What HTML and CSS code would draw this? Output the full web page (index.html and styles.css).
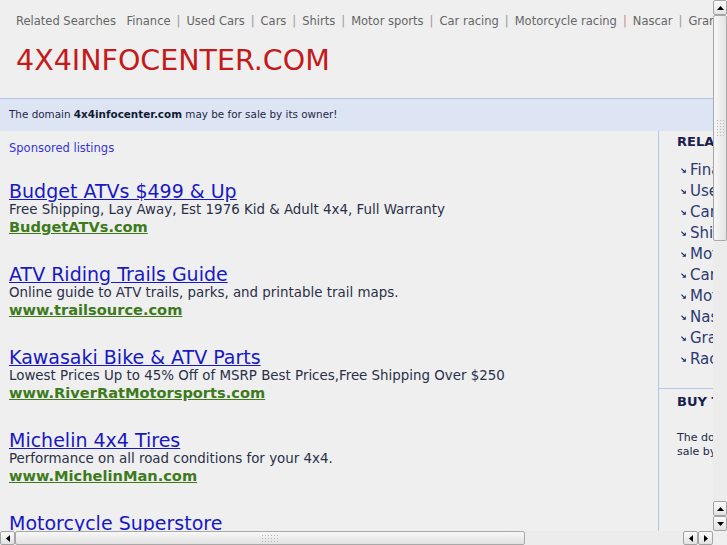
FILE: index.html
```html
<!DOCTYPE html>
<html>
<head>
<meta charset="utf-8">
<link rel="stylesheet" href="styles.css">
</head>
<body>
<div class="window">
  <div class="page">
    <div class="topbar">
      <span class="rs-label">Related Searches</span>
      <a>Finance</a><span class="sep">|</span><a>Used Cars</a><span class="sep">|</span><a>Cars</a><span class="sep">|</span><a>Shirts</a><span class="sep">|</span><a>Motor sports</a><span class="sep">|</span><a>Car racing</a><span class="sep">|</span><a>Motorcycle racing</a><span class="sep red">|</span><a>Nascar</a><span class="sep">|</span><a>Gran</a>
    </div>
    <div class="brand">4X4INFOCENTER.COM</div>
    <div class="domainbar">The domain <b>4x4infocenter.com</b> may be for sale by its owner!</div>
    <div class="content">
      <div class="main">
        <div class="sponsored">Sponsored listings</div>
        <div class="ad">
          <a class="ad-title">Budget ATVs $499 &amp; Up</a>
          <div class="ad-desc">Free Shipping, Lay Away, Est 1976 Kid &amp; Adult 4x4, Full Warranty</div>
          <a class="ad-url">BudgetATVs.com</a>
        </div>
        <div class="ad">
          <a class="ad-title">ATV Riding Trails Guide</a>
          <div class="ad-desc">Online guide to ATV trails, parks, and printable trail maps.</div>
          <a class="ad-url">www.trailsource.com</a>
        </div>
        <div class="ad">
          <a class="ad-title">Kawasaki Bike &amp; ATV Parts</a>
          <div class="ad-desc">Lowest Prices Up to 45% Off of MSRP Best Prices,Free Shipping Over $250</div>
          <a class="ad-url">www.RiverRatMotorsports.com</a>
        </div>
        <div class="ad">
          <a class="ad-title">Michelin 4x4 Tires</a>
          <div class="ad-desc">Performance on all road conditions for your 4x4.</div>
          <a class="ad-url">www.MichelinMan.com</a>
        </div>
        <div class="ad">
          <a class="ad-title">Motorcycle Superstore</a>
        </div>
      </div>
      <div class="side">
        <div class="side-box">
          <div class="side-head">RELA</div>
          <ul class="side-list">
            <li><svg class="arr" viewBox="0 0 5 5" width="5" height="5"><path d="M0.4 0.6 L2.8 3" stroke="#1c2a66" stroke-width="1.1" fill="none"/><path d="M4.8 1.2 L4.8 4.8 L1.2 4.8 Z" fill="#1c2a66"/></svg>Fina</li>
            <li><svg class="arr" viewBox="0 0 5 5" width="5" height="5"><path d="M0.4 0.6 L2.8 3" stroke="#1c2a66" stroke-width="1.1" fill="none"/><path d="M4.8 1.2 L4.8 4.8 L1.2 4.8 Z" fill="#1c2a66"/></svg>Use</li>
            <li><svg class="arr" viewBox="0 0 5 5" width="5" height="5"><path d="M0.4 0.6 L2.8 3" stroke="#1c2a66" stroke-width="1.1" fill="none"/><path d="M4.8 1.2 L4.8 4.8 L1.2 4.8 Z" fill="#1c2a66"/></svg>Car</li>
            <li><svg class="arr" viewBox="0 0 5 5" width="5" height="5"><path d="M0.4 0.6 L2.8 3" stroke="#1c2a66" stroke-width="1.1" fill="none"/><path d="M4.8 1.2 L4.8 4.8 L1.2 4.8 Z" fill="#1c2a66"/></svg>Shi</li>
            <li><svg class="arr" viewBox="0 0 5 5" width="5" height="5"><path d="M0.4 0.6 L2.8 3" stroke="#1c2a66" stroke-width="1.1" fill="none"/><path d="M4.8 1.2 L4.8 4.8 L1.2 4.8 Z" fill="#1c2a66"/></svg>Mot</li>
            <li><svg class="arr" viewBox="0 0 5 5" width="5" height="5"><path d="M0.4 0.6 L2.8 3" stroke="#1c2a66" stroke-width="1.1" fill="none"/><path d="M4.8 1.2 L4.8 4.8 L1.2 4.8 Z" fill="#1c2a66"/></svg>Car</li>
            <li><svg class="arr" viewBox="0 0 5 5" width="5" height="5"><path d="M0.4 0.6 L2.8 3" stroke="#1c2a66" stroke-width="1.1" fill="none"/><path d="M4.8 1.2 L4.8 4.8 L1.2 4.8 Z" fill="#1c2a66"/></svg>Mot</li>
            <li><svg class="arr" viewBox="0 0 5 5" width="5" height="5"><path d="M0.4 0.6 L2.8 3" stroke="#1c2a66" stroke-width="1.1" fill="none"/><path d="M4.8 1.2 L4.8 4.8 L1.2 4.8 Z" fill="#1c2a66"/></svg>Nas</li>
            <li><svg class="arr" viewBox="0 0 5 5" width="5" height="5"><path d="M0.4 0.6 L2.8 3" stroke="#1c2a66" stroke-width="1.1" fill="none"/><path d="M4.8 1.2 L4.8 4.8 L1.2 4.8 Z" fill="#1c2a66"/></svg>Gra</li>
            <li><svg class="arr" viewBox="0 0 5 5" width="5" height="5"><path d="M0.4 0.6 L2.8 3" stroke="#1c2a66" stroke-width="1.1" fill="none"/><path d="M4.8 1.2 L4.8 4.8 L1.2 4.8 Z" fill="#1c2a66"/></svg>Rac</li>
          </ul>
        </div>
        <div class="side-box buy">
          <div class="side-head">BUY T</div>
          <p class="side-text">The do<br>sale by</p>
        </div>
      </div>
    </div>
  </div>
  <div class="vscroll">
    <div class="sbtn"><svg viewBox="0 0 7 4" width="7" height="4"><path d="M0 4 L3.5 0 L7 4 Z" fill="#000"/></svg></div>
    <div class="thumb vthumb"><span class="grip vgrip"></span></div>
    <div class="track"></div>
    <div class="sbtn"><svg viewBox="0 0 7 4" width="7" height="4"><path d="M0 4 L3.5 0 L7 4 Z" fill="#000"/></svg></div>
    <div class="sbtn"><svg viewBox="0 0 7 4" width="7" height="4"><path d="M0 0 L7 0 L3.5 4 Z" fill="#000"/></svg></div>
  </div>
  <div class="hscroll">
    <div class="sbtn"><svg viewBox="0 0 4 7" width="4" height="7"><path d="M4 0 L4 7 L0 3.5 Z" fill="#000"/></svg></div>
    <div class="thumb hthumb"><span class="grip hgrip"></span></div>
    <div class="track"></div>
    <div class="sbtn"><svg viewBox="0 0 4 7" width="4" height="7"><path d="M4 0 L4 7 L0 3.5 Z" fill="#000"/></svg></div>
    <div class="sbtn"><svg viewBox="0 0 4 7" width="4" height="7"><path d="M0 0 L4 3.5 L0 7 Z" fill="#000"/></svg></div>
  </div>
  <div class="corner"></div>
</div>
</body>
</html>
```
FILE: styles.css
```css
html, body {
  margin: 0;
  padding: 0;
  overflow: hidden;
  background: #efefef;
}
body {
  font-family: "DejaVu Sans", Verdana, sans-serif;
}
.window {
  display: grid;
  grid-template-columns: 713px 14px;
  grid-template-rows: 531px 14px;
  width: 727px;
  height: 545px;
}
.page {
  overflow: hidden;
  background: #efefef;
}
.topbar {
  height: 43px;
  line-height: 43px;
  padding-left: 16px;
  font-size: 11.5px;
  color: #666;
  white-space: nowrap;
}
.rs-label { margin-right: 7px; }
.topbar a { color: #666; }
.sep { margin: 0 6px; color: #9a9a9a; }
.sep.red { color: #c88; }
.brand {
  height: 55px;
  line-height: 36px;
  padding-left: 16px;
  font-size: 28.5px;
  color: #c41a1a;
  white-space: nowrap;
}
.domainbar {
  border-top: 1px solid #b3c6e6;
  background: #dde5f4;
  height: 30px;
  line-height: 30px;
  padding: 0 0 2px 9px;
  font-size: 10.4px;
  color: #1d2748;
  white-space: nowrap;
}
.domainbar b { color: #111a33; }
.content {
  display: flex;
}
.main {
  flex: none;
  padding: 1px 0 0 9px;
  border-right: 1px solid #b3c6e6;
  height: 420px;
  box-sizing: border-box;
  width: 659px;
}
.sponsored {
  line-height: 32px;
  font-size: 11.5px;
  color: #3434d8;
  margin-bottom: 17px;
}
.ad {
  margin-bottom: 29px;
  white-space: nowrap;
}
.ad-title {
  display: block;
  font-size: 19px;
  line-height: 20px;
  color: #1818c4;
  text-decoration: underline;
}
.ad-desc {
  font-size: 13.4px;
  line-height: 17px;
  color: #2a2f4a;
}
.ad-url {
  display: block;
  font-size: 14.6px;
  line-height: 17px;
  font-weight: bold;
  color: #3d7a1c;
  text-decoration: underline;
}
.side {
  flex: 1;
  min-width: 0;
}
.side-box {
  padding: 0 0 18px 18px;
}
.side-head {
  font-size: 13px;
  font-weight: bold;
  line-height: 22px;
  color: #17204e;
  white-space: nowrap;
}
.side-list {
  list-style: none;
  margin: 7px 0 0 0;
  padding: 0;
}
.side-list li {
  font-size: 15px;
  line-height: 21px;
  color: #2b3a72;
  display: flex;
  align-items: center;
  white-space: nowrap;
}
.arr {
  margin: 0 4px 0 4px;
  flex: none;
}
.buy {
  border-top: 1px solid #b3c6e6;
  padding-top: 2px;
}
.side-text {
  margin: 18px 0 0 0;
  font-size: 11px;
  line-height: 14px;
  color: #1d2748;
  white-space: nowrap;
}
/* scrollbars */
.vscroll {
  display: flex;
  flex-direction: column;
  background: #f2f2f2;
}
.hscroll {
  display: flex;
  flex-direction: row;
  background: #f2f2f2;
}
.corner {
  background: #efefef;
}
.track {
  flex: 1;
  background-color: #f4f4f4;
  background-image: radial-gradient(circle, #e2e2e2 0.6px, transparent 0.8px);
  background-size: 2px 2px;
}
.sbtn {
  flex: none;
  width: 14px;
  height: 14px;
  box-sizing: border-box;
  border: 1px solid #a4a4a4;
  border-radius: 2px;
  background: linear-gradient(#fbfbfb, #e2e2e2);
  display: flex;
  align-items: center;
  justify-content: center;
}
.vscroll .sbtn { height: 15px; }
.hscroll .sbtn { width: 15px; }
.thumb {
  flex: none;
  box-sizing: border-box;
  border: 1px solid #a8a8a8;
  border-radius: 2px;
  display: flex;
  align-items: center;
  justify-content: center;
}
.vthumb {
  height: 226px;
  background: linear-gradient(90deg, #f7f7f7, #e4e4e4);
}
.hthumb {
  width: 510px;
  background: linear-gradient(#f7f7f7, #e2e2e2);
}
.grip {
  display: block;
  background-image: radial-gradient(circle, #b8b8b8 0.7px, transparent 1px);
  background-size: 3px 3px;
}
.vgrip { width: 9px; height: 18px; }
.hgrip { width: 18px; height: 9px; }
```
